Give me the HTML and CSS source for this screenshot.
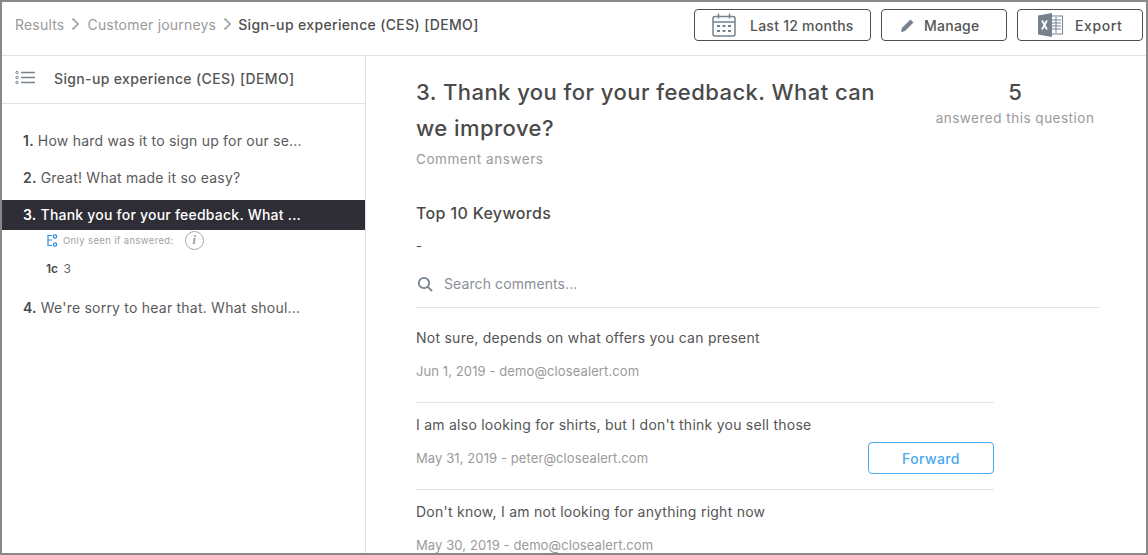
FILE: index.html
```html
<!DOCTYPE html>
<html lang="en">
<head>
<meta charset="utf-8">
<title>Sign-up experience (CES) [DEMO]</title>
<link rel="stylesheet" href="styles.css">
</head>
<body>
<div class="frame">
  <header class="topbar">
    <nav class="crumbs">
      <span class="crumb">Results</span>
      <svg class="chev" width="9" height="14" viewBox="0 0 9 14"><path d="M1.5 1.5 7 7l-5.500 5.500" fill="none" stroke="#a9a9a9" stroke-width="1.800"/></svg>
      <span class="crumb">Customer journeys</span>
      <svg class="chev" width="9" height="14" viewBox="0 0 9 14"><path d="M1.5 1.5 7 7l-5.500 5.500" fill="none" stroke="#a9a9a9" stroke-width="1.800"/></svg>
      <span class="crumb-current">Sign-up experience (CES) [DEMO]</span>
    </nav>
    <div class="actions">
      <button class="btn btn-period">
        <svg width="24" height="24" viewBox="0 0 24 24" fill="none"><rect x="1" y="3.500" width="22" height="19.500" rx="2" stroke="#76838f" stroke-width="1.500"/><path d="M1 9h22" stroke="#76838f" stroke-width="1.500"/><path d="M6.500 0.500v5M17.500 0.500v5" stroke="#76838f" stroke-width="1.500"/><path d="M5 13h3M10.500 13h3M16 13h3M5 18h3M10.500 18h3M16 18h3" stroke="#76838f" stroke-width="1.800"/></svg>
        <span>Last 12 months</span>
      </button>
      <button class="btn btn-manage">
        <svg width="15" height="15" viewBox="0 0 15 15"><path d="M10.500 1.500l3 3L5 13l-4 1.200L1.800 10z" fill="#76838f"/></svg>
        <span>Manage</span>
      </button>
      <button class="btn btn-export">
        <svg width="25" height="24" viewBox="0 0 25 24"><rect x="12" y="3" width="12.500" height="18" fill="#fff" stroke="#76838f"/><path d="M14 7h9M14 10h9M14 13h9M14 16h9M18 4v16" stroke="#76838f" stroke-width="1"/><path d="M0 2.500 14 0v24L0 21.500z" fill="#76838f"/><path d="M4 7.500l5 9M9 7.500l-5 9" stroke="#fff" stroke-width="1.800"/></svg>
        <span>Export</span>
      </button>
    </div>
  </header>
  <div class="body">
    <aside class="sidebar">
      <div class="side-head">
        <svg class="list-icon" width="21" height="13" viewBox="0 0 21 13" fill="none" stroke="#76838f"><circle cx="2" cy="1.500" r="1.200"/><circle cx="2" cy="6.500" r="1.200"/><circle cx="2" cy="11.500" r="1.200"/><path d="M6 1.500h14M6 6.500h14M6 11.500h14" stroke-width="1.400"/></svg>
        <span>Sign-up experience (CES) [DEMO]</span>
      </div>
      <ol class="questions">
        <li class="q"><b>1.</b> How hard was it to sign up for our se...</li>
        <li class="q"><b>2.</b> Great! What made it so easy?</li>
        <li class="q q-active"><b>3.</b> Thank you for your feedback. What ...</li>
        <li class="cond">
          <div class="cond-line">
            <svg width="11" height="13" viewBox="0 0 11 13" fill="none" stroke="#2e8fe0" stroke-width="1.200"><path d="M1 1.500h4M1 1v10.500h4M1 6h4"/><circle cx="8" cy="2.500" r="1.700"/><circle cx="8" cy="10.500" r="1.700"/></svg>
            <span class="cond-text">Only seen if answered:</span>
            <span class="info">i</span>
          </div>
          <div class="cond-ref"><b>1c</b> 3</div>
        </li>
        <li class="q q-last"><b>4.</b> We're sorry to hear that. What shoul...</li>
      </ol>
    </aside>
    <main class="content">
      <div class="q-head">
        <div class="q-title-wrap">
          <h1 class="q-title">3. Thank you for your feedback. What can we improve?</h1>
          <div class="q-type">Comment answers</div>
        </div>
        <div class="q-stat">
          <div class="q-count">5</div>
          <div class="q-label">answered this question</div>
        </div>
      </div>
      <h2 class="kw-title">Top 10 Keywords</h2>
      <div class="kw-val">-</div>
      <div class="search">
        <svg width="16" height="16" viewBox="0 0 16 16" fill="none" stroke="#76838f" stroke-width="1.800"><circle cx="7" cy="7" r="5.200"/><path d="M10.800 10.800 15 15"/></svg>
        <span>Search comments...</span>
      </div>
      <div class="comments">
        <article class="comment">
          <p class="c-text">Not sure, depends on what offers you can present</p>
          <div class="c-meta"><span>Jun 1, 2019 - demo@closealert.com</span></div>
        </article>
        <article class="comment">
          <p class="c-text">I am also looking for shirts, but I don't think you sell those</p>
          <div class="c-meta"><span>May 31, 2019 - peter@closealert.com</span><button class="forward">Forward</button></div>
        </article>
        <article class="comment">
          <p class="c-text">Don't know, I am not looking for anything right now</p>
          <div class="c-meta"><span>May 30, 2019 - demo@closealert.com</span></div>
        </article>
      </div>
    </main>
  </div>
</div>
</body>
</html>
```
FILE: styles.css
```css
* { box-sizing: border-box; }
html, body { margin: 0; height: 100%; overflow: hidden; background: #fff; }
body { font-family: "Inter", "Noto Sans", sans-serif; color: #4a4a4a; }
.frame { width: 1148px; height: 555px; border: 2px solid #888; display: flex; flex-direction: column; overflow: hidden; background: #fff; }
.topbar { height: 54px; flex: none; border-bottom: 1px solid #e2e2e2; display: flex; justify-content: space-between; align-items: flex-start; padding: 7px 3px 0 13px; }
.crumbs { display: flex; align-items: center; height: 30px; font-size: 14px; letter-spacing: 0.2px; }
.crumb { color: #9a9a9a; }
.chev { margin: 0 7px 0 7px; }
.chev:last-of-type { margin-right: 6px; }
.crumb-current { color: #4f4f4f; font-weight: 500; letter-spacing: 0.35px; }
.actions { display: flex; gap: 10px; }
.btn { height: 32px; background: #fff; border: 1px solid #4b4f55; border-radius: 4px; display: flex; align-items: center; font: 500 14px "Inter", sans-serif; letter-spacing: 0.25px; color: #555; padding: 0; }
.btn-period { width: 177px; padding-left: 17px; gap: 14px; }
.btn-manage { width: 126px; padding-left: 18px; gap: 9px; }
.btn-export { width: 126px; padding-left: 20px; gap: 12px; letter-spacing: 0.6px; }
.body { flex: 1; display: flex; min-height: 0; }
.sidebar { width: 364px; flex: none; border-right: 1px solid #e2e2e2; }
.side-head { height: 48px; border-bottom: 1px solid #e2e2e2; display: flex; align-items: center; gap: 18px; padding: 0 0 2px 13px; font-size: 14px; font-weight: 500; letter-spacing: 0.35px; color: #555; }
.list-icon { margin-top: -2px; }
.questions { list-style: none; margin: 0; padding: 22px 0 0; }
.q { height: 30px; margin-bottom: 7px; display: flex; align-items: center; gap: 4px; padding: 0 0 2px 21px; font-size: 14px; letter-spacing: 0.22px; color: #5a5a5a; }
.q b { font-weight: 600; color: #4a4a4a; }
.q-active { background: #2f2e36; color: #fff; margin-bottom: 0; font-weight: 500; }
.q-active b { color: #fff; }
.q-last { margin-top: 14px; }
.cond { padding: 0 0 0 45px; }
.cond-line { display: flex; align-items: center; height: 20px; gap: 5px; }
.cond-text { font-size: 9.500px; letter-spacing: 0.36px; color: #a2a2a2; }
.info { width: 19px; height: 19px; margin-left: 6px; border: 1px solid #aaa; border-radius: 50%; display: flex; align-items: center; justify-content: center; font: italic 700 12px "Liberation Serif", serif; color: #999; }
.cond-ref { margin: 11px 0 0 -1px; font-size: 12px; color: #666; height: 18px; }
.cond-ref b { font-weight: 600; color: #4a4a4a; margin-right: 2px; }
.content { flex: 1; min-width: 0; padding: 18px 46px 0 50px; }
.q-head { display: flex; align-items: flex-start; }
.q-title-wrap { width: 500px; flex: none; }
.q-title { margin: 0; font-size: 22px; line-height: 36px; font-weight: 500; letter-spacing: 0.45px; color: #4a4a4a; width: 480px; }
.q-type { margin-top: 3px; font-size: 13.500px; letter-spacing: 0.55px; color: #9a9a9a; line-height: 20px; }
.q-stat { margin-left: 19px; width: 160px; text-align: center; }
.q-count { font-size: 22px; line-height: 36px; font-weight: 500; }
.q-label { font-size: 13.500px; letter-spacing: 0.5px; color: #9a9a9a; line-height: 16px; white-space: nowrap; }
.kw-title { margin: 34px 0 0; font-size: 16px; letter-spacing: 0.35px; line-height: 20px; font-weight: 500; color: #4a4a4a; }
.kw-val { margin-top: 13px; font-size: 13px; line-height: 20px; }
.search { margin-top: 16px; height: 36px; display: flex; align-items: center; gap: 11px; border-bottom: 1px solid #e2e4e8; font-size: 14px; letter-spacing: 0.1px; color: #8a8f96; padding: 0 0 12px 1px; }
.comments { width: 578px; }
.comment { height: 87px; border-bottom: 1px solid #e2e2e2; padding-top: 12px; }
.comment:first-child { height: 95px; padding-top: 20px; }
.comment:last-child { border-bottom: 0; }
.c-text { margin: 0; font-size: 14px; letter-spacing: 0.25px; line-height: 20px; color: #555; }
.c-meta { margin-top: 13px; height: 20px; display: flex; justify-content: space-between; align-items: center; font-size: 13px; letter-spacing: 0.1px; color: #9a9a9a; position: relative; }
.forward { position: absolute; right: 0; top: -6px; width: 126px; height: 32px; background: #fff; border: 1px solid #4aa8ee; border-radius: 4px; color: #4aa8ee; font: 500 14px "Inter", sans-serif; letter-spacing: 0.4px; padding: 0; }
```
